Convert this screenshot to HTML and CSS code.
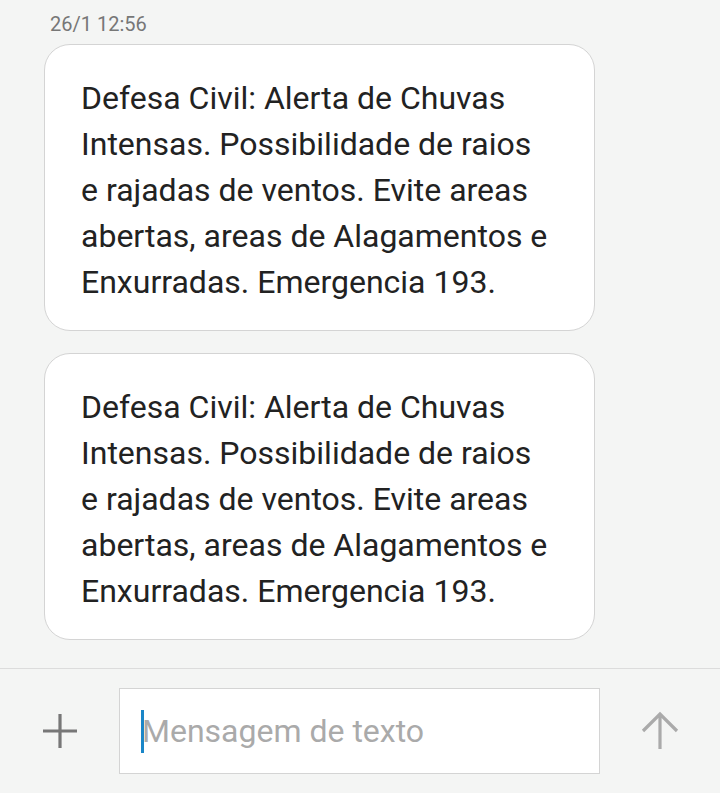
FILE: index.html
```html
<!DOCTYPE html>
<html lang="pt">
<head>
    <meta charset="UTF-8">
    <meta name="viewport" content="width=device-width, initial-scale=1.0">
    <title>Mensagens</title>
    <link rel="stylesheet" href="styles.css">
</head>
<body>
    <div id="thread">
        <p class="time">26/1 12:56</p>
        <div class="bubble">Defesa Civil: Alerta de Chuvas Intensas. Possibilidade de raios e rajadas de ventos. Evite areas abertas, areas de Alagamentos e Enxurradas. Emergencia 193.</div>
        <div class="bubble">Defesa Civil: Alerta de Chuvas Intensas. Possibilidade de raios e rajadas de ventos. Evite areas abertas, areas de Alagamentos e Enxurradas. Emergencia 193.</div>
    </div>

    <div id="composer">
        <div class="side-button">
            <svg width="36" height="36" viewBox="0 0 36 36">
                <path d="M18 1v34M1 18h34" stroke="#777" stroke-width="3.2" fill="none"/>
            </svg>
        </div>
        <div class="text-field">
            <span class="caret"></span>
            <span class="placeholder">Mensagem de texto</span>
        </div>
        <div class="side-button">
            <svg width="40" height="40" viewBox="0 0 40 40">
                <path d="M20 38V4M3 20L20 3l17 17" stroke="#aaa" stroke-width="3.2" fill="none"/>
            </svg>
        </div>
    </div>
</body>
</html>
```
FILE: styles.css
```css
body {
    margin: 0;
    font-family: Roboto, "Noto Sans", sans-serif;
    background-color: #f4f5f4;
}

#thread {
    height: 668px;
    padding: 12px 0 0 44px;
    box-sizing: border-box;
}

.time {
    margin: 0 0 8px 6px;
    font-size: 20px;
    line-height: 24px;
    color: #777;
}

.bubble {
    width: 551px;
    box-sizing: border-box;
    padding: 30px 41px 25px 36px;
    margin-bottom: 22px;
    background-color: #fff;
    border: 1px solid #d4d4d4;
    border-radius: 26px;
    font-size: 32px;
    line-height: 46px;
    color: #222;
}

#composer {
    display: flex;
    align-items: center;
    border-top: 1px solid #dcdcdc;
    padding: 19px 0;
}

.side-button {
    width: 119px;
    display: flex;
    justify-content: center;
    align-items: center;
}

.text-field {
    width: 481px;
    height: 86px;
    box-sizing: border-box;
    display: flex;
    align-items: center;
    padding-left: 21px;
    background-color: #fff;
    border: 1px solid #d4d4d4;
}

.caret {
    width: 3px;
    height: 43px;
    background-color: #1a86c8;
}

.placeholder {
    margin-left: -2px;
    font-size: 32px;
    color: #aaa;
}
```
